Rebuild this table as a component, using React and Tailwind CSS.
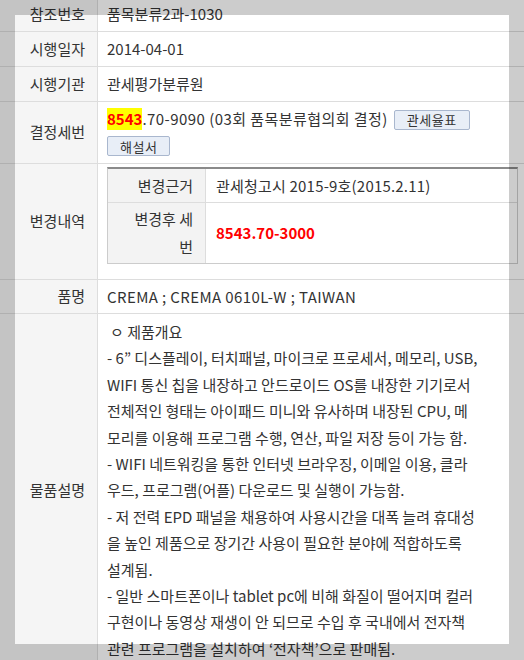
import React from "react";

const descLines = [
  "ㅇ 제품개요",
  "- 6” 디스플레이, 터치패널, 마이크로 프로세서, 메모리, USB,",
  "WIFI 통신 칩을 내장하고 안드로이드 OS를 내장한 기기로서",
  "전체적인 형태는 아이패드 미니와 유사하며 내장된 CPU, 메",
  "모리를 이용해 프로그램 수행, 연산, 파일 저장 등이 가능 함.",
  "- WIFI 네트워킹을 통한 인터넷 브라우징, 이메일 이용, 클라",
  "우드, 프로그램(어플) 다운로드 및 실행이 가능함.",
  "- 저 전력 EPD 패널을 채용하여 사용시간을 대폭 늘려 휴대성",
  "을 높인 제품으로 장기간 사용이 필요한 분야에 적합하도록",
  "설계됨.",
  "- 일반 스마트폰이나 tablet pc에 비해 화질이 떨어지며 컬러",
  "구현이나 동영상 재생이 안 되므로 수입 후 국내에서 전자책",
  "관련 프로그램을 설치하여 ‘전자책’으로 판매됨.",
];

const Label = ({ children }) => (
  <div className="flex items-center justify-end bg-[#f5f5f5] border-r border-b border-[#dddddd] pr-[12px]">
    {children}
  </div>
);

const Value = ({ children, className = "" }) => (
  <div className={`border-b border-[#dddddd] pl-[9px] ${className}`}>
    {children}
  </div>
);

const SmallButton = ({ children }) => (
  <button className="inline-flex items-center h-[20px] px-[12px] rounded-[2px] border border-[#a9b7ce] bg-[#e8eef7] text-[13px] tracking-[0.5px] text-[#333333] leading-none">
    {children}
  </button>
);

export default function App() {
  return (
    <div className="relative w-[524px] h-[660px] overflow-hidden bg-white font-['Noto_Sans_CJK_KR',sans-serif] text-[15px] text-[#333333]">
      <div className="-mt-[3px] grid grid-cols-[98px_1fr]">
        <Label>참조번호</Label>
        <Value className="py-[6px] leading-[22px]">품목분류2과-1030</Value>

        <Label>시행일자</Label>
        <Value className="py-[6px] leading-[22px]">2014-04-01</Value>

        <Label>시행기관</Label>
        <Value className="py-[6px] leading-[22px]">관세평가분류원</Value>

        <Label>결정세번</Label>
        <Value className="pt-[6px] pb-[7px]">
          <div className="flex items-center leading-[22px] whitespace-nowrap">
            <span className="bg-[#ffff00] text-[#ff0000] font-bold">8543</span>
            <span className="tracking-[0.45px]">.70-9090 (03회 품목분류협의회 결정)</span>
            <span className="ml-[6px]">
              <SmallButton>관세율표</SmallButton>
            </span>
          </div>
          <div className="mt-[6px] flex">
            <SmallButton>해설서</SmallButton>
          </div>
        </Value>

        <Label>변경내역</Label>
        <Value className="pt-[3px] pb-[15px] pr-[6px]">
          <div className="grid grid-cols-[98px_1fr] border-t-2 border-t-[#8a8a8a] border-x border-b border-x-[#cccccc] border-b-[#cccccc]">
            <div className="flex items-center justify-end bg-[#f3f3f3] border-r border-b border-[#dddddd] pr-[12px] py-[3px] leading-[27px]">
              변경근거
            </div>
            <div className="flex items-center border-b border-[#dddddd] pl-[10px] py-[3px] leading-[27px] whitespace-nowrap tracking-[0.2px]">
              관세청고시 2015-9호(2015.2.11)
            </div>
            <div className="flex items-center justify-end text-right bg-[#f3f3f3] border-r border-[#dddddd] pr-[12px] py-[2px] leading-[28px]">
              변경후 세<br />번
            </div>
            <div className="flex items-center pl-[10px] py-[2px] leading-[28px] font-bold text-[#ff0000]">
              8543.70-3000
            </div>
          </div>
        </Value>

        <Label>품명</Label>
        <Value className="py-[6px] leading-[21px] tracking-[0.4px]">CREMA ; CREMA 0610L-W ; TAIWAN</Value>

        <Label>물품설명</Label>
        <Value className="py-[5px] leading-[26.4px]">
          {descLines.map((line, i) => (
            <div key={i} className={`whitespace-nowrap ${i === 0 ? "pl-[3px]" : ""}`}>
              {line}
            </div>
          ))}
        </Value>
      </div>

      {/* dimmed page with a highlighted box */}
      <div className="pointer-events-none absolute left-[15px] top-[15px] w-[494px] h-[629px] shadow-[0_0_0_9999px_rgba(0,0,0,0.2)]" />
    </div>
  );
}
